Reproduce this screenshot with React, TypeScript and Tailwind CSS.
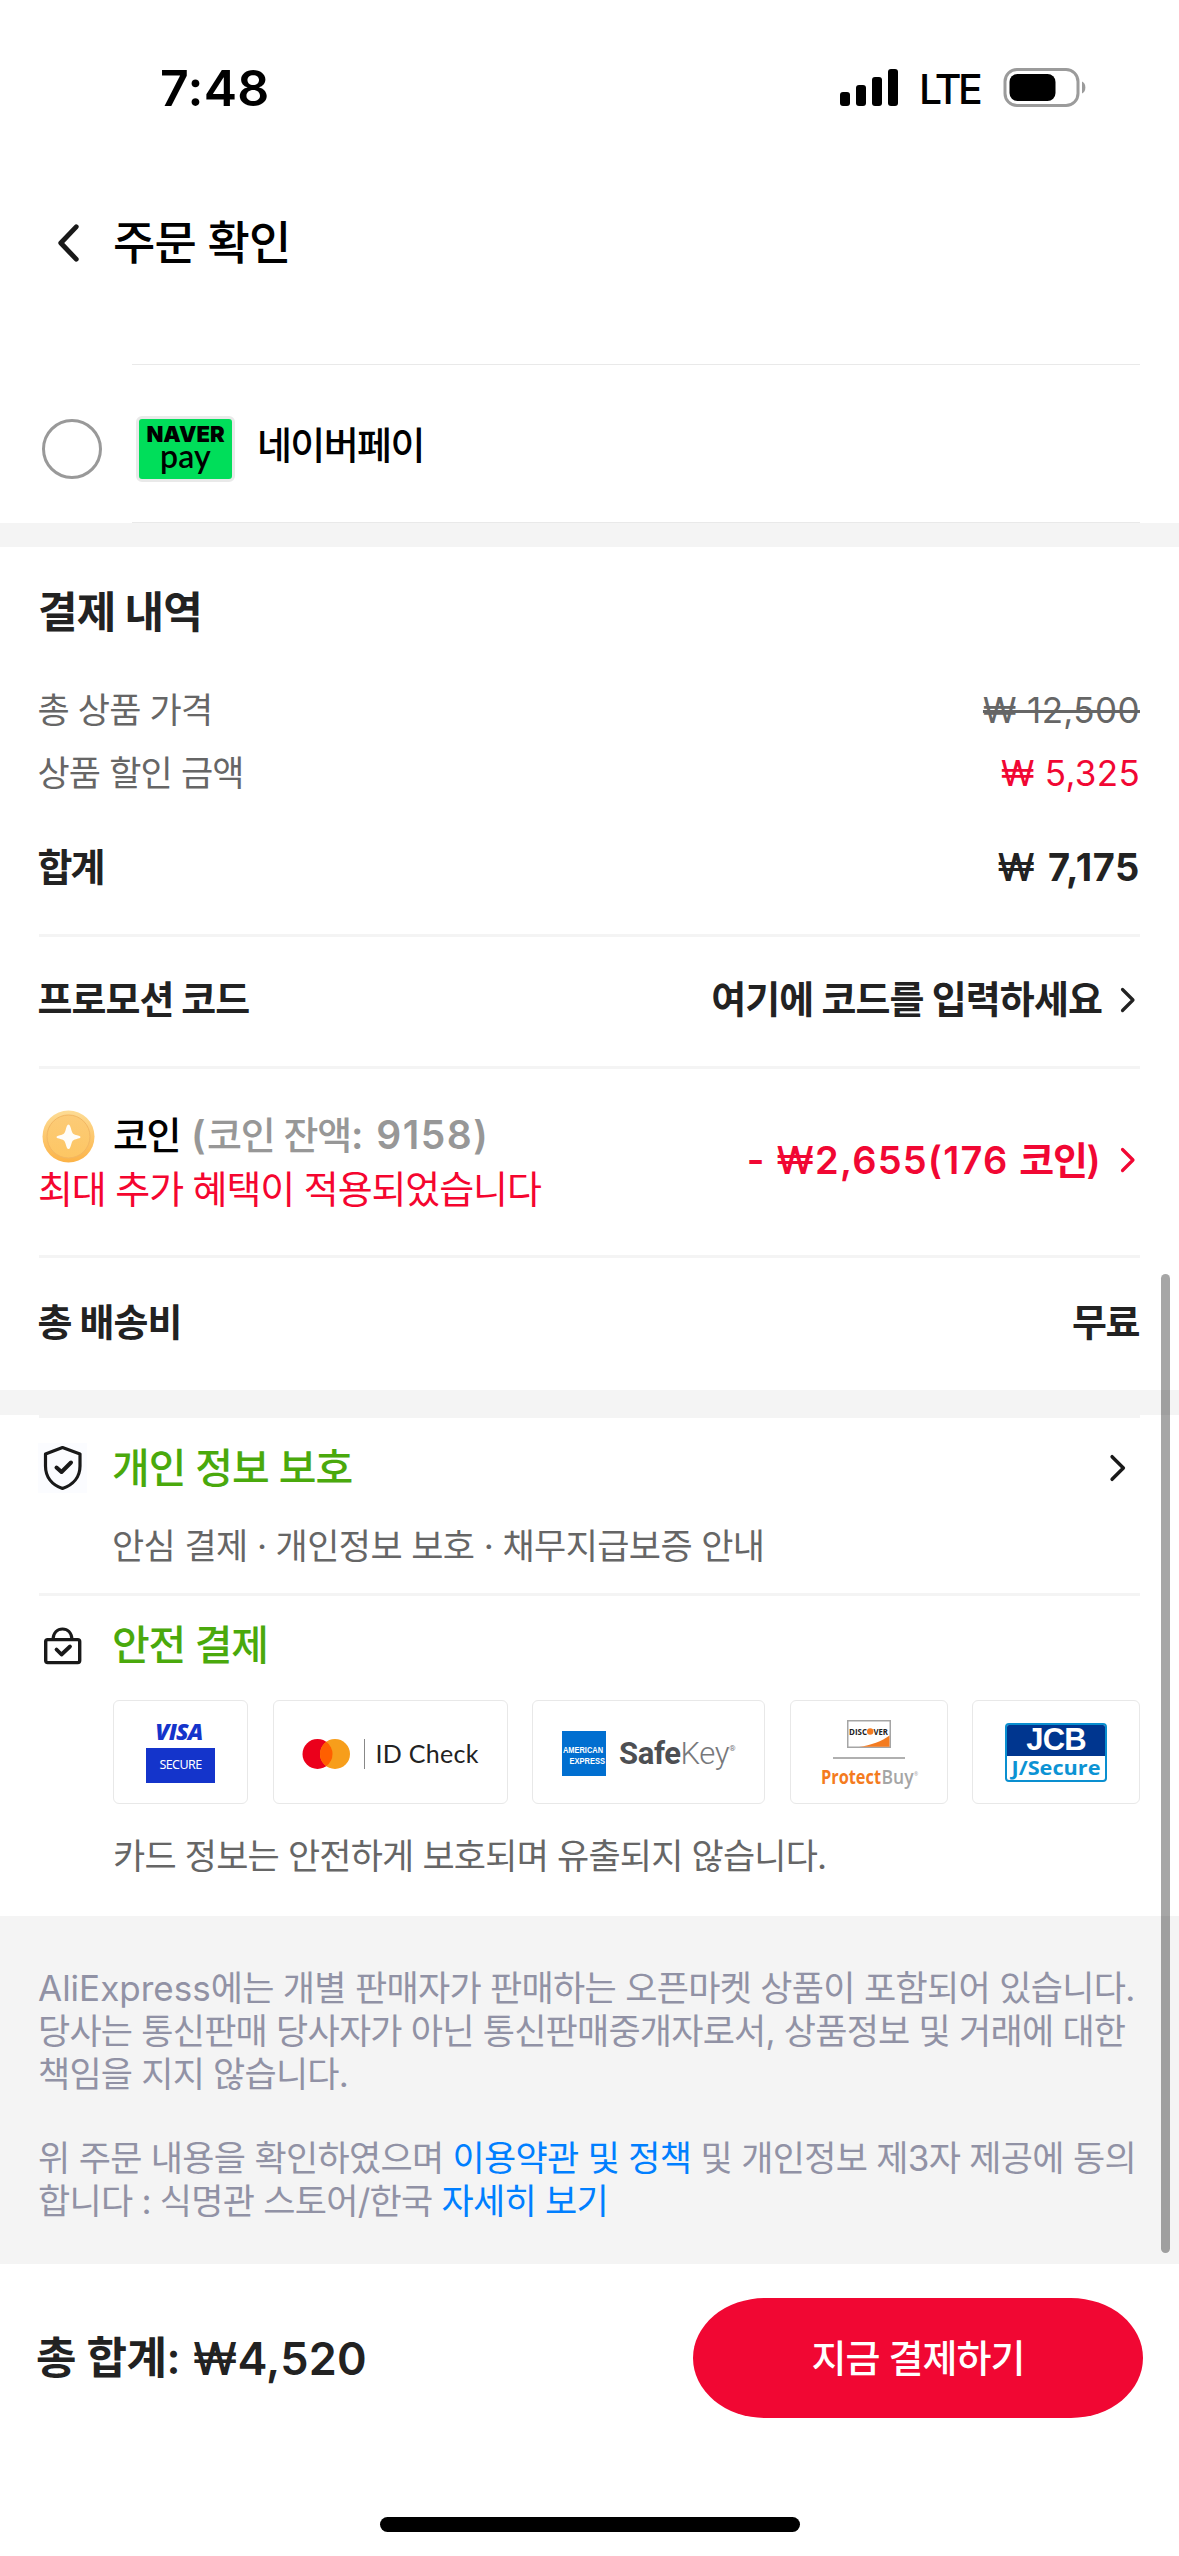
import type { ReactNode } from "react";

function Chevron({ className, dir = "right" }: { className: string; dir?: "left" | "right" }) {
  return (
    <svg className={className} viewBox="0 0 16 26" fill="none" stroke="currentColor" strokeWidth="3.2" strokeLinecap="round" strokeLinejoin="round">
      <path d={dir === "right" ? "M2.5 2.5L13 13L2.5 23.5" : "M13 2.5L3 13L13 23.5"} />
    </svg>
  );
}

function Divider() {
  return <div className="mx-[39px] h-[3px] shrink-0 bg-[#f4f4f4]" />;
}

function StatusBar() {
  return (
    <div className="flex h-[175px] items-center">
      <span className="ml-[160px] w-[110px] text-[50px] font-semibold leading-none tracking-[0.3px]">7:48</span>
      <svg className="ml-[569px] h-[37px] w-[60px] shrink-0" viewBox="0 0 60 37">
        <rect x="1" y="23" width="10" height="14" rx="3" />
        <rect x="17" y="16" width="10" height="21" rx="3" />
        <rect x="33" y="8" width="10" height="29" rx="3" />
        <rect x="49" y="0" width="10" height="37" rx="3" />
      </svg>
      <span className="ml-[20px] mt-[3px] w-[84px] text-[41px] font-medium leading-none tracking-[-3.6px]">LTE</span>
      <svg className="h-[39px] w-[84px] shrink-0" viewBox="0 0 84 39">
        <rect x="2" y="1.5" width="73" height="36" rx="12" fill="none" stroke="#9b9b9b" strokeWidth="3" />
        <rect x="6.5" y="6" width="46" height="27" rx="8" />
        <path d="M79 13.5C83.500 15 83.500 24 79 25.500Z" fill="#9b9b9b" />
      </svg>
    </div>
  );
}

function NaverPayRow() {
  return (
    <div className="flex h-[157px] items-center pl-[42px] pt-[11px]">
      <span className="h-[60px] w-[60px] shrink-0 rounded-full border-[3px] border-[#999]" />
      <span className="ml-[34px] flex h-[66px] w-[99px] shrink-0 flex-col items-center rounded-[6px] border-[3px] border-[#e9e9e9] bg-[#00de5a] text-black">
        <span className="mt-[5px] font-['Inter'] text-[22px] font-black leading-[20px] tracking-[0px]">NAVER</span>
        <span className="font-['Lato'] text-[32px] font-semibold leading-[24px] tracking-[0.2px]">pay</span>
      </span>
      <span className="-mt-[8px] ml-[22px] text-[38px] font-medium leading-none tracking-[-1.6px]">네이버페이</span>
    </div>
  );
}

function Row({ className, label, children }: { className: string; label: ReactNode; children: ReactNode }) {
  return (
    <div className={`flex shrink-0 items-center justify-between pl-[37.5px] pr-[39px] leading-none ${className}`}>
      <span>{label}</span>
      {children}
    </div>
  );
}

function CoinRow() {
  return (
    <div className="flex h-[186px] shrink-0 justify-between pl-[38px] pr-[43px] leading-none">
      <div className="flex flex-col pt-[37px]">
        <div className="flex h-[60px] items-center">
          <svg className="ml-[4px] h-[53px] w-[53px]" viewBox="0 0 53 53">
            <defs>
              <linearGradient id="coin" x1="0" y1="0" x2="0" y2="1">
                <stop offset="0" stopColor="#fddc95" />
                <stop offset="1" stopColor="#fcb347" />
              </linearGradient>
              <linearGradient id="coinFace" x1="0" y1="0" x2="0" y2="1">
                <stop offset="0" stopColor="#fccb77" />
                <stop offset="1" stopColor="#fdc663" />
              </linearGradient>
            </defs>
            <circle cx="26.500" cy="26.500" r="26" fill="url(#coin)" />
            <circle cx="26.500" cy="26.500" r="21.500" fill="url(#coinFace)" stroke="#f2b763" strokeWidth="1" />
            <path d="M26.500 14.500C28 14.500 28.500 17 29.500 20.500C30.500 23.500 31 24 34 25C37 25.800 38.500 26 38.500 27C38.500 28 37 28.300 34 29.200C31 30 30.500 30.500 29.500 33.500C28.500 37 28 39 26.500 39C25 39 24.500 37 23.500 33.500C22.500 30.500 22 30 19 29.200C16 28.300 14.500 28 14.500 27C14.500 26 16 25.800 19 25C22 24 22.500 23.500 23.500 20.500C24.500 17 25 14.500 26.500 14.500Z" fill="#fffdf8" />
          </svg>
          <span className="-mt-[3px] ml-[18px] whitespace-nowrap text-[38px] font-medium text-black">
            <span className="tracking-[-1.5px]">코인</span>
            <span className="ml-[11px] text-[39px] font-semibold tracking-[1.5px] text-[#979797]">
              (<span className="text-[38px] font-medium tracking-[-1.2px]">코인 잔액</span>: 9158)
            </span>
          </span>
        </div>
        <div className="mt-[4px] flex h-[38px] items-center text-[38px] tracking-[-1.1px] text-[#f5052f]">최대 추가 혜택이 적용되었습니다</div>
      </div>
      <div className="flex items-center pb-[5px] text-[#f10733]">
        <span className="whitespace-nowrap text-[38px] font-semibold tracking-[1.2px]">
          - <span className="font-medium">₩</span>2,655(176 <span className="tracking-[-1.3px]">코인</span>)
        </span>
        <Chevron className="ml-[18px] h-[26px] w-[16px]" />
      </div>
    </div>
  );
}

function ShieldIcon() {
  return (
    <svg className="h-[50px] w-[49px] bg-[#fbfcff]" viewBox="0 0 49 50" fill="none" stroke="#191919" strokeLinecap="round" strokeLinejoin="round">
      <path d="M24.500 4.500L42 11V23C42 34 35 42 24.500 45.500C14 42 7.500 34 7.500 23V11Z" strokeWidth="3.200" />
      <path d="M18.500 24.500L23.500 29L33 19.500" strokeWidth="4" />
    </svg>
  );
}

function LockIcon() {
  return (
    <svg className="h-[38px] w-[49px]" viewBox="0 0 49 38" fill="none" stroke="#191919" strokeLinecap="round" strokeLinejoin="round">
      <path d="M15 12C15.500 5.500 19.500 2 24.500 2C29.500 2 33.500 5.500 34 12" strokeWidth="3.200" />
      <rect x="7.700" y="12.600" width="34" height="23" rx="2" strokeWidth="3.400" />
      <path d="M18.500 22.500L23.500 27.500L32 19.500" strokeWidth="3.800" />
    </svg>
  );
}

function Badge({ className, children }: { className: string; children: ReactNode }) {
  return <div className={`h-[104px] shrink-0 rounded-[6px] border border-[#e8e8e8] bg-white ${className}`}>{children}</div>;
}

function VisaSecure() {
  return (
    <div className="flex h-full flex-col items-center">
      <span className="mt-[18px] h-[24px] pr-[3px] font-['Open_Sans'] text-[23px] font-extrabold italic leading-[24px] tracking-[-0.8px] text-[#1434cb]">VISA</span>
      <span className="mt-[5px] flex h-[35px] w-[69px] items-center justify-center bg-[#1434cb] font-['Noto_Sans'] text-[12.5px] leading-none tracking-[-0.6px] text-white">SECURE</span>
    </div>
  );
}

function IdCheck() {
  return (
    <div className="flex h-full items-center pl-[28px] pt-[3px]">
      <svg className="h-[32px] w-[64px] shrink-0" viewBox="0 0 64 32">
        <circle cx="15.500" cy="16" r="15" fill="#eb001b" />
        <circle cx="33" cy="16" r="15" fill="#f79e1b" />
        <path d="M24.250 3.800A15 15 0 0 1 24.250 28.200A15 15 0 0 1 24.250 3.800Z" fill="#ff5f00" />
        <rect x="62" y="1" width="1" height="30" fill="#888" />
      </svg>
      <span className="ml-[10px] whitespace-nowrap font-['Lato'] text-[25px] leading-none tracking-[0.3px] text-[#222]">ID Check</span>
    </div>
  );
}

function SafeKey() {
  return (
    <div className="flex h-full items-center pl-[29px] pt-[3px]">
      <svg className="h-[45px] w-[44px] shrink-0" viewBox="0 0 44 45">
        <rect width="44" height="45" fill="#016fd0" />
        <text x="1" y="22" fill="#fff" fontFamily="Liberation Sans" fontWeight="700" fontSize="9" textLength="40" lengthAdjust="spacingAndGlyphs">AMERICAN</text>
        <text x="7.500" y="32.500" fill="#fff" fontFamily="Liberation Sans" fontWeight="700" fontSize="9" textLength="35.500" lengthAdjust="spacingAndGlyphs">EXPRESS</text>
      </svg>
      <span className="ml-[13px] flex whitespace-nowrap font-['Roboto'] text-[31px] leading-none tracking-[-0.4px] text-[#4d4f53]">
        <span className="font-bold">Safe</span>
        <span className="font-light text-[#77787b]">Key</span>
        <span className="mt-[7px] text-[8px] text-[#77787b]">®</span>
      </span>
    </div>
  );
}

function Discover() {
  return (
    <div className="flex h-full flex-col items-center">
      <svg className="mt-[19px] h-[28px] w-[44px] shrink-0" viewBox="0 0 44 28">
        <rect x="0.750" y="0.750" width="42.500" height="26.500" fill="#fff" stroke="#a5a5a5" strokeWidth="1.500" />
        <path d="M42.500 15.500V26.800H12C24 25.500 35 21 42.500 15.500Z" fill="#f47b20" />
        <text x="2" y="14.800" fill="#222" fontFamily="Open Sans" fontWeight="700" fontSize="9" textLength="18" lengthAdjust="spacingAndGlyphs">DISC</text>
        <circle cx="23.200" cy="11.500" r="3.200" fill="#f47b20" />
        <text x="26.500" y="14.800" fill="#222" fontFamily="Open Sans" fontWeight="700" fontSize="9" textLength="14.500" lengthAdjust="spacingAndGlyphs">VER</text>
      </svg>
      <span className="mt-[9px] h-[1.5px] w-[72px] shrink-0 bg-[#b0b0b0]" />
      <svg className="mt-[7px] h-[28px] w-[100px] shrink-0" viewBox="0 0 100 28">
        <text x="2" y="18" fill="#f47b20" fontFamily="Open Sans" fontWeight="700" fontSize="20" textLength="60" lengthAdjust="spacingAndGlyphs">Protect</text>
        <text x="62.500" y="18" fill="#a5a5a5" fontFamily="Open Sans" fontWeight="600" fontSize="20" textLength="32" lengthAdjust="spacingAndGlyphs">Buy</text>
        <text x="95" y="10" fill="#a5a5a5" fontFamily="Open Sans" fontSize="5">®</text>
      </svg>
    </div>
  );
}

function JSecure() {
  return (
    <div className="mx-auto mt-[22px] flex h-[59px] w-[102px] flex-col overflow-hidden rounded-[4px] border-2 border-[#0a8fd0] bg-white">
      <span className="-mx-[2px] -mt-[2px] flex h-[33px] shrink-0 items-center justify-center bg-[#00368f] font-['Liberation_Sans'] text-[31px] font-bold leading-none tracking-[-0.8px] text-white">
        JCB
      </span>
      <svg className="h-[24px] w-[98px] shrink-0" viewBox="0 0 98 24">
        <text x="4.500" y="18.500" fill="#0c93d4" fontFamily="Open Sans" fontWeight="700" fontSize="20" textLength="89" lengthAdjust="spacingAndGlyphs">J/Secure</text>
      </svg>
    </div>
  );
}

export default function App() {
  return (
    <div className="relative flex h-[2556px] w-[1179px] flex-col overflow-hidden bg-white font-['Inter','Noto_Sans_CJK_KR',sans-serif] text-black">
      <StatusBar />
      <header className="flex h-[136px] shrink-0 items-center pl-[56px]">
        <Chevron dir="left" className="h-[40px] w-[25px] text-[#191919]" />
        <h1 className="-mt-[2px] ml-[32px] text-[46px] font-medium leading-none tracking-[-0.8px]">주문 확인</h1>
      </header>

      <div className="ml-[132px] mr-[39px] mt-[53px] h-px shrink-0 bg-[#e9e9e9]" />
      <NaverPayRow />
      <div className="ml-[132px] mr-[39px] h-px shrink-0 bg-[#e9e9e9]" />
      <div className="h-[24px] shrink-0 bg-[#f4f4f4]" />

      <section className="flex flex-col text-[#222]">
        <h2 className="flex h-[131px] items-center px-[38px] text-[43px] font-bold leading-none tracking-[-0.9px]">결제 내역</h2>
        <Row className="h-[64px] text-[35px] text-[#666]" label={<span className="tracking-[-0.85px]">총 상품 가격</span>}>
          <span className="tracking-[0.4px] line-through decoration-[3px]">₩ 12,500</span>
        </Row>
        <Row className="h-[61px] pt-[2px] text-[35px] text-[#666]" label={<span className="tracking-[-0.85px]">상품 할인 금액</span>}>
          <span className="tracking-[0.3px] text-[#f10733]">₩ 5,325</span>
        </Row>
        <Row className="h-[128px] text-[38px] font-bold" label={<span className="tracking-[-2px]">합계</span>}>
          <span className="tracking-[0.6px]"><span className="mr-[3px] font-medium">₩</span> 7,175</span>
        </Row>
        <div className="h-[3px]" />
        <Divider />
        <Row className="h-[129px] pb-[6px] text-[38px] font-bold" label={<span className="tracking-[-1px]">프로모션 코드</span>}>
          <span className="mr-[4px] flex items-center">
            <span className="tracking-[-0.9px]">여기에 코드를 입력하세요</span>
            <Chevron className="ml-[18px] mt-[2px] h-[26px] w-[16px]" />
          </span>
        </Row>
        <Divider />
        <CoinRow />
        <Divider />
        <Row className="h-[132px] pb-[4px] text-[38px] font-bold" label={<span className="tracking-[-1px]">총 배송비</span>}>
          <span className="mr-[1px] tracking-[-1.5px]">무료</span>
        </Row>
      </section>

      <div className="h-[25px] shrink-0 bg-[#f4f4f4]" />
      <Divider />

      <section className="flex flex-col">
        <div className="flex h-[100px] items-center pl-[38px] pr-[52px]">
          <ShieldIcon />
          <span className="ml-[25px] text-[41px] font-medium leading-none tracking-[-1px] text-[#4aa90c]">개인 정보 보호</span>
          <Chevron className="ml-auto h-[28px] w-[18px] text-[#191919]" />
        </div>
        <p className="flex h-[55px] items-center pl-[112px] pt-[1px] text-[35px] leading-none tracking-[-0.6px] text-[#666]">안심 결제 · 개인정보 보호 · 채무지급보증 안내</p>
        <div className="h-[20px]" />
        <Divider />
        <div className="flex h-[99px] items-center pl-[38px]">
          <LockIcon />
          <span className="ml-[25px] text-[41px] font-medium leading-none tracking-[-1.2px] text-[#4aa90c]">안전 결제</span>
        </div>
        <div className="mt-[5px] flex justify-between pl-[113px] pr-[39px]">
          <Badge className="w-[135px]"><VisaSecure /></Badge>
          <Badge className="w-[235px]"><IdCheck /></Badge>
          <Badge className="w-[233px]"><SafeKey /></Badge>
          <Badge className="w-[158px]"><Discover /></Badge>
          <Badge className="w-[168px]"><JSecure /></Badge>
        </div>
        <p className="flex h-[112px] items-center pb-[7px] pl-[113px] text-[35px] leading-none tracking-[-0.82px] text-[#666]">카드 정보는 안전하게 보호되며 유출되지 않습니다.</p>
      </section>

      <section className="h-[348px] shrink-0 whitespace-nowrap bg-[#f4f4f4] pl-[38px] pt-[51px] text-[35px] leading-[43px] text-[#9192a5]">
        <p>AliExpress<span className="tracking-[-0.7px]">에는 개별 판매자가 판매하는 오픈마켓 상품이 포함되어 있습니다.</span></p>
        <p className="tracking-[-0.78px]">당사는 통신판매 당사자가 아닌 통신판매중개자로서, 상품정보 및 거래에 대한</p>
        <p className="tracking-[-0.8px]">책임을 지지 않습니다.</p>
        <p className="mt-[41px] tracking-[-0.7px]">위 주문 내용을 확인하였으며 <a className="text-[#007fff]">이용약관 및 정책</a> 및 개인정보 제3자 제공에 동의</p>
        <p className="tracking-[-0.75px]">합니다 : 식명관 스토어/한국 <a className="text-[#007fff]">자세히 보기</a></p>
      </section>

      <footer className="flex h-[188px] shrink-0 items-center justify-between pl-[36px] pr-[36px] leading-none">
        <span className="flex items-center whitespace-nowrap text-[45px] font-semibold text-[#222]">
          <span className="w-[157px] text-[44px] tracking-[-0.5px]">총 합계:</span>
          <span className="tracking-[0.2px]"><span className="font-medium">₩</span>4,520</span>
        </span>
        <button className="h-[120px] w-[450px] rounded-[72px_/_60px] bg-[#f10733] text-[38px] font-medium leading-none tracking-[-1px] text-white">지금 결제하기</button>
      </footer>
      <div className="mx-auto mt-[65px] h-[15px] w-[420px] shrink-0 rounded-full bg-black" />
      <div className="absolute left-[1161px] top-[1274px] h-[979px] w-[9px] rounded-full bg-black/35" />
    </div>
  );
}
